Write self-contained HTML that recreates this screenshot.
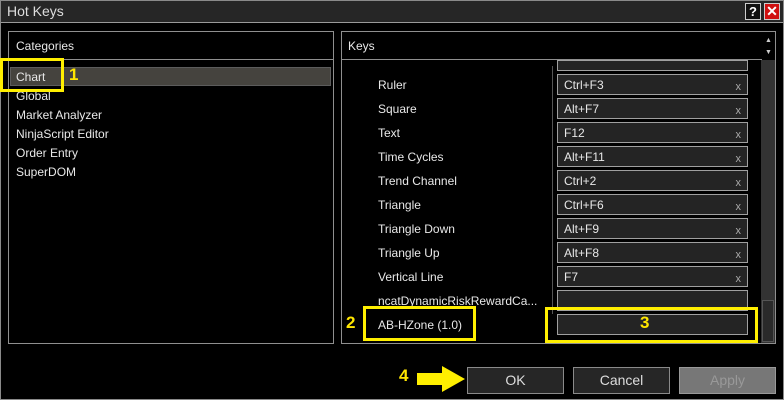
<!DOCTYPE html><html><head><style>
*{margin:0;padding:0;box-sizing:border-box}
body{width:784px;height:400px;background:#000;position:relative;overflow:hidden;font-family:"Liberation Sans",sans-serif;font-size:12px;color:#e8e8e8}
.a{position:absolute}
.win{left:0;top:0;width:784px;height:400px;border:1px solid #8a8a8a}
.title{left:1px;top:1px;width:782px;height:22px;background:#262626;border-bottom:1px solid #9a9a9a}
.panel{border:1px solid #8f8f8f}
.hdr{border-bottom:1px solid #8f8f8f}
.box{left:557px;width:191px;height:21px;border:1px solid #a0a0a0;background:#242424;padding:3px 0 0 6px}
.box span{position:absolute;right:6px;top:6px;color:#aaa;font-size:11px}
.lbl{left:378px}
.yb{border:3px solid #ffef00}
.num{color:#ffe600;font-weight:bold;font-size:17px}
.btn{top:367px;height:27px;width:97px;border:1px solid #8a8a8a;background:#262626;text-align:center;line-height:25px;font-size:14px;color:#ddd}
</style></head><body>
<div class="a win"></div>
<div class="a title"></div>
<div class="a" style="left:7px;top:3px;font-size:14px;color:#ddd">Hot Keys</div>
<div class="a" style="left:745px;top:3px;width:16px;height:17px;border:1px solid #ccc;background:#111;color:#fff;font-weight:bold;font-size:13px;text-align:center;line-height:15px">?</div>
<div class="a" style="left:764px;top:3px;width:16px;height:17px;border:1px solid #ccc;background:#d01010;color:#fff;font-weight:bold;font-size:14px;text-align:center;line-height:15px">✕</div>

<div class="a panel" style="left:8px;top:31px;width:326px;height:313px"></div>
<div class="a hdr" style="left:9px;top:32px;width:324px;height:28px"></div>
<div class="a" style="left:16px;top:39px">Categories</div>
<div class="a" style="left:10px;top:67px;width:321px;height:19px;background:#45433e;border:1px solid #5c5c5c"></div>
<div class="a" style="left:16px;top:70px">Chart</div>
<div class="a" style="left:16px;top:89px">Global</div>
<div class="a" style="left:16px;top:108px">Market Analyzer</div>
<div class="a" style="left:16px;top:127px">NinjaScript Editor</div>
<div class="a" style="left:16px;top:146px">Order Entry</div>
<div class="a" style="left:16px;top:165px">SuperDOM</div>

<div class="a panel" style="left:341px;top:31px;width:435px;height:313px"></div>
<div class="a hdr" style="left:342px;top:32px;width:420px;height:28px"></div>
<div class="a" style="left:348px;top:39px">Keys</div>
<div class="a" style="left:761px;top:60px;width:14px;height:283px;background:#333"></div>
<div class="a" style="left:762px;top:300px;width:12px;height:42px;background:#2a2a2a;border:1px solid #555"></div>
<div class="a" style="left:765px;top:37px;font-size:7px;color:#ccc">▲</div>
<div class="a" style="left:765px;top:49px;font-size:7px;color:#ccc">▼</div>
<div class="a" style="left:552px;top:66px;width:1px;height:248px;background:#555"></div>
<div class="a box" style="top:60px;height:11px"></div>
<div class="a lbl" style="top:78px">Ruler</div><div class="a box" style="top:74px">Ctrl+F3<span>x</span></div>
<div class="a lbl" style="top:102px">Square</div><div class="a box" style="top:98px">Alt+F7<span>x</span></div>
<div class="a lbl" style="top:126px">Text</div><div class="a box" style="top:122px">F12<span>x</span></div>
<div class="a lbl" style="top:150px">Time Cycles</div><div class="a box" style="top:146px">Alt+F11<span>x</span></div>
<div class="a lbl" style="top:174px">Trend Channel</div><div class="a box" style="top:170px">Ctrl+2<span>x</span></div>
<div class="a lbl" style="top:198px">Triangle</div><div class="a box" style="top:194px">Ctrl+F6<span>x</span></div>
<div class="a lbl" style="top:222px">Triangle Down</div><div class="a box" style="top:218px">Alt+F9<span>x</span></div>
<div class="a lbl" style="top:246px">Triangle Up</div><div class="a box" style="top:242px">Alt+F8<span>x</span></div>
<div class="a lbl" style="top:270px">Vertical Line</div><div class="a box" style="top:266px">F7<span>x</span></div>
<div class="a lbl" style="top:294px">ncatDynamicRiskRewardCa...</div><div class="a box" style="top:290px"></div>
<div class="a lbl" style="top:318px">AB-HZone (1.0)</div><div class="a box" style="top:314px"></div>

<div class="a yb" style="left:0;top:58px;width:64px;height:34px"></div>
<div class="a num" style="left:69px;top:65px">1</div>
<div class="a yb" style="left:363px;top:306px;width:113px;height:35px"></div>
<div class="a num" style="left:346px;top:313px">2</div>
<div class="a yb" style="left:545px;top:307px;width:213px;height:36px"></div>
<div class="a num" style="left:640px;top:313px">3</div>
<div class="a num" style="left:399px;top:366px">4</div>
<svg class="a" style="left:417px;top:366px" width="50" height="28"><polygon points="0,7 25,7 25,0 48,13 25,26 25,19 0,19" fill="#ffef00"/></svg>

<div class="a btn" style="left:467px">OK</div>
<div class="a btn" style="left:573px">Cancel</div>
<div class="a btn" style="left:679px;background:#777;color:#999;border-color:#999">Apply</div>
</body></html>
